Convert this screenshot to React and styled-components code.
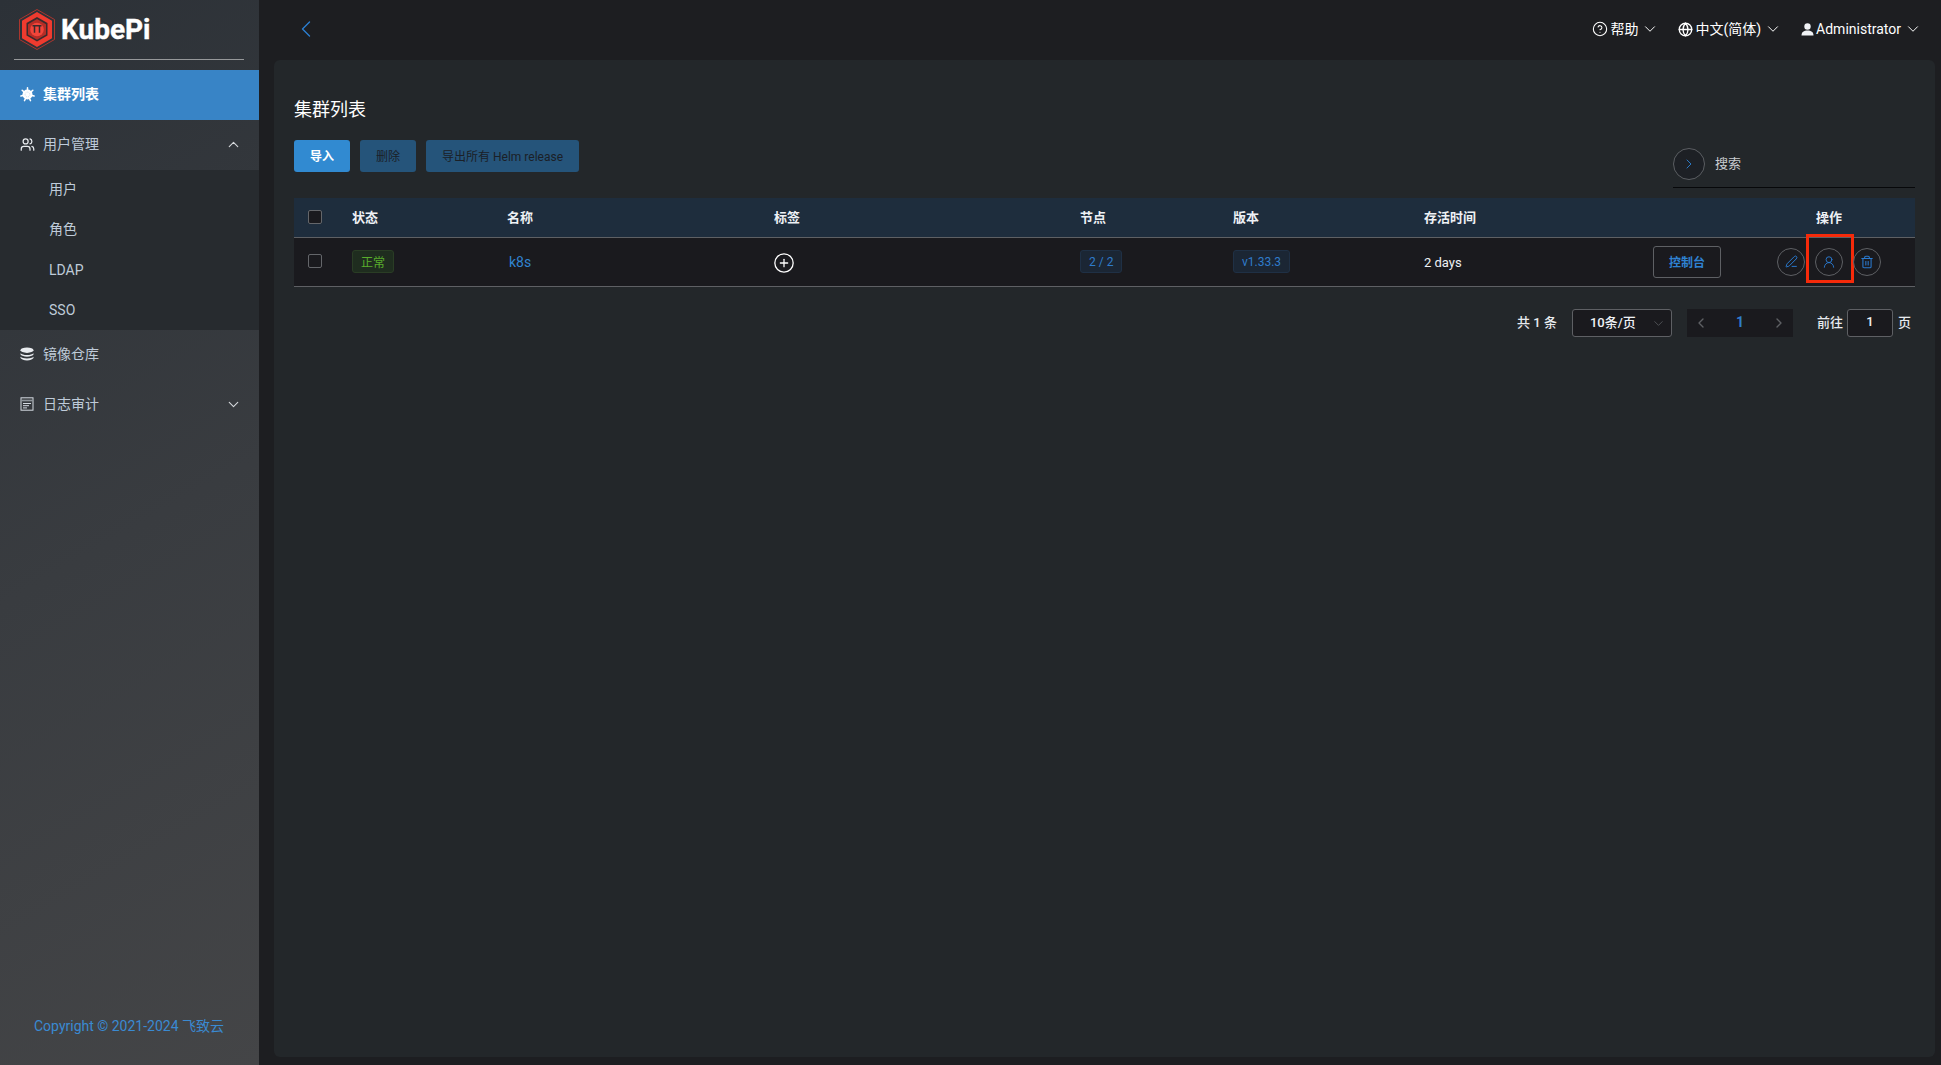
import React from "react";
import styled, { createGlobalStyle } from "styled-components";
import { ChevronLeft, ChevronRight, ChevronUp, ChevronDown, CircleHelp, Globe, Users, CirclePlus, PenLine, UserRound, Trash2 } from "lucide-react";

const FONT = `Roboto, "Noto Sans CJK SC", sans-serif`;
const COLS = "48px 155px 267px 306px 153px 191px 226px 103px 172px";

const Global = createGlobalStyle`
  html, body { margin: 0; padding: 0; height: 100%; }
  body { font-family: ${FONT}; background: #1d1e21; color: #fff; overflow: hidden; }
  * { box-sizing: border-box; }
`;

const Page = styled.div`display: flex; height: 1065px; width: 1941px;`;
const Side = styled.aside`
  width: 259px; flex: none; display: flex; flex-direction: column;
  background: linear-gradient(150deg, #2c3137 0%, #393c40 50%, #444547 100%);
`;
const Brand = styled.div`
  height: 60px; margin: 0 15px 10px 14px; padding: 9px 0 0 5px; display: flex; gap: 6px; align-items: flex-start;
  border-bottom: 1px solid #96989a;
`;
const BrandName = styled.span`
  font-size: 28px; font-weight: 700; line-height: 42px; color: #fff; -webkit-text-stroke: 0.4px #fff;
`;
const MenuRow = styled.div`
  height: 50px; display: flex; align-items: center; padding: 0 17px 5px 20px; gap: 9px; font-size: 14px;
  background: ${p => p.$active ? "#3884c6" : "transparent"};
  color: ${p => p.$active ? "#fff" : "#bfcbd9"};
  font-weight: ${p => p.$active ? 700 : 400};
  svg { flex: none; }
  > svg { margin-top: 3px; }
`;
const IconSlot = styled.span`
  width: 14px; height: 14px; flex: none; display: flex; align-items: center; justify-content: center; margin-top: 3px;
`;
const MenuLabel = styled.span`flex: 1;`;
const SubMenu = styled.div`background: #272b2f; padding: 0;`;
const SubRow = styled.div`
  height: 40px; display: flex; align-items: center; padding: 0 0 ${p => p.$latin ? 1 : 5}px 49px; font-size: 14px; color: #bfcbd9;
`;
const Copyright = styled.div`
  margin-top: auto; height: 75px; padding: 26px 0 0 34px; font-size: 14px; line-height: 20px; color: #3a8ad2;
`;
const Main = styled.main`flex: 1; min-width: 0; display: flex; flex-direction: column;`;
const Top = styled.header`
  height: 60px; flex: none; display: flex; align-items: center; justify-content: space-between; padding: 0 19px 2px 33px;
  color: #2c7fd0;
`;
const TopRight = styled.div`display: flex; align-items: center; gap: 19px;`;
const TopItem = styled.div`
  display: flex; align-items: center; gap: 2px; font-size: 14px; color: #fff;
  svg:last-child { margin-left: 1px; }
`;
const TopCjk = styled.span`padding-bottom: 2px;`;
const Card = styled.section`
  flex: 1; margin: 0 6px 8px 15px; padding: 37px 20px 0; background: #23272a; border-radius: 6px;
`;
const Title = styled.h1`margin: 0; font-size: 18px; line-height: 26px; font-weight: 400; color: #fff;`;
const ToolRow = styled.div`display: flex; justify-content: space-between; align-items: flex-start; margin-top: 17px; height: 58px;`;
const Buttons = styled.div`display: flex; gap: 10px;`;
const Btn = styled.div`
  height: 32px; padding: 0 16px 2px; border-radius: 3px; display: flex; align-items: center; font-size: 12px;
  background: ${p => p.$on ? "#318ad1" : "#25547a"};
  color: ${p => p.$on ? "#fff" : "#1b2027"};
  font-weight: ${p => p.$on ? 700 : 400};
`;
const Search = styled.div`
  width: 242px; height: 48px; padding: 8px 0 0; display: flex; align-items: flex-start; gap: 10px;
  border-bottom: 1px solid #07080a; font-size: 13px; color: #c9ccd0;
`;
const SearchRound = styled.div`
  width: 32px; height: 32px; border-radius: 50%; border: 1px solid #5b5e62; background: #1d2025;
  display: flex; align-items: center; justify-content: center; color: #2c7fd0;
`;
const SearchText = styled.span`line-height: 32px;`;
const HeadRow = styled.div`
  display: grid; grid-template-columns: ${COLS}; height: 40px; align-items: center; padding-bottom: 3px;
  background: #1e2d3d; border-bottom: 1px solid #5e6064; font-size: 13px; font-weight: 700; color: #eef1f5;
`;
const BodyRow = styled.div`
  display: grid; grid-template-columns: ${COLS}; height: 49px; align-items: center;
  background: #1a1a1e; border-bottom: 1px solid #5e6064; font-size: 13px; color: #eef1f5;
`;
const Cell = styled.div`
  padding-left: ${p => p.$pad ?? 10}px; display: flex; align-items: center;
  justify-content: ${p => p.$center ? "center" : "flex-start"};
`;
const Check = styled.span`
  width: 14px; height: 14px; border: 1px solid #64666a; border-radius: 2px; background: #1a1a1e; display: block;
  margin-bottom: ${p => p.$up ?? 0}px;
`;
const Tag = styled.span`
  height: 23px; margin-bottom: 1px; padding: 0 8px ${p => p.$green ? 1 : 0}px; border-radius: 3px; display: inline-flex; align-items: center; font-size: 12px;
  background: ${p => p.$green ? "#1f2d1f" : "#1b2634"};
  border: 1px solid ${p => p.$green ? "#2a3d25" : "#1f3045"};
  color: ${p => p.$green ? "#59ad2c" : "#2f7ccb"};
`;
const ClusterLink = styled.span`font-size: 14px; color: #3184d0; padding-left: 2px;`;
const AddTag = styled.span`display: flex; margin: 2px 0 0 -1px; color: #fff;`;
const ConsoleBtn = styled.div`
  width: 68px; height: 32px; padding-bottom: 1px; margin-bottom: 1px; border: 1px solid #5e6064; border-radius: 3px; display: flex; align-items: center; justify-content: center;
  font-size: 12px; font-weight: 700; color: #2f82d2;
`;
const Actions = styled.div`display: flex; gap: 10px; align-items: center; justify-content: center; width: 100%; height: 100%; padding-bottom: 1px;`;
const RoundBtn = styled.div`
  position: relative; width: 28px; height: 28px; border-radius: 50%; border: 1px solid #5e6064;
  display: flex; align-items: center; justify-content: center; color: #2a7ad0;
`;
const Highlight = styled.span`
  position: absolute; left: -10px; top: -15px; width: 48px; height: 49px; border: 3px solid #f62a0a; pointer-events: none;
`;
const Pager = styled.div`
  display: flex; justify-content: flex-end; align-items: center; height: 28px; margin-top: 22px; padding-right: 4px;
  font-size: 13px; font-weight: 500; color: #e8ebef;
`;
const PagerText = styled.span`padding-bottom: 4px; margin-right: ${p => p.$gap ?? 0}px;`;
const SizeSelect = styled.div`
  width: 100px; height: 28px; border: 1px solid #5e6064; border-radius: 3px; background: #1a1a1e; margin-right: 15px;
  display: flex; align-items: center; justify-content: space-between; padding: 0 5px 4px 17px; color: #eef1f5; font-size: 13px;
  svg { color: #5e6064; margin-top: 4px; }
`;
const PageBox = styled.div`
  width: 106px; height: 28px; background: #1a1a1e; display: flex; align-items: center; justify-content: space-between; padding: 0 6px;
  color: #5e6064; margin-right: 24px;
`;
const PageNum = styled.span`font-size: 14px; font-weight: 700; color: #2f7ccb; padding-bottom: 2px;`;
const JumpInput = styled.div`
  width: 46px; height: 28px; margin: 0 5px 0 4px; padding-bottom: 3px; border: 1px solid #5e6064; border-radius: 3px; background: #1a1a1e;
  display: flex; align-items: center; justify-content: center; font-size: 13px; color: #eef1f5;
`;

const Logo = () => (
  <svg width="36" height="41" viewBox="0 0 36 41" style={{ flex: "none" }}>
    <polygon points="18,0.5 35.5,10.5 35.5,30.5 18,40.5 0.5,30.5 0.5,10.5" fill="none" stroke="#c9372c" strokeWidth="0.8" />
    <polygon points="18,3 33,11.7 33,29.3 18,38 3,29.3 3,11.7" fill="#ef3b2f" />
    <polygon points="18,8 28.5,14 28.5,26.5 18,32.5 7.5,26.5 7.5,14" fill="#3a2a2c" />
    <polygon points="18,10 27,15.2 27,25.5 18,30.7 9,25.5 9,15.2" fill="#b52d26" />
    <circle cx="18" cy="20.5" r="6.8" fill="#f2453a" />
    <path d="M13.5 16.8h9M15.5 16.8v7M20.5 16.8v7" stroke="#3a2a2c" strokeWidth="1.5" fill="none" />
  </svg>
);

const K8sIcon = () => (
  <svg width="15" height="15" viewBox="0 0 15 15">
    <g stroke="#fff" strokeWidth="1.5" strokeLinecap="round">
      <path d="M7.5 7.5V0.8M7.5 7.5L12.8 3.3M7.5 7.5L14.1 9M7.5 7.5L10.5 13.6M7.5 7.5L4.5 13.6M7.5 7.5L0.9 9M7.5 7.5L2.2 3.3" />
    </g>
    <circle cx="7.5" cy="7.5" r="5" fill="#fff" />
    <circle cx="7.5" cy="7.5" r="2.4" fill="none" stroke="#b9d3ea" strokeWidth="0.8" strokeDasharray="1 1" />
  </svg>
);

const StackIcon = () => (
  <svg width="14" height="14" viewBox="0 0 14 14" fill="#e8ebef">
    <ellipse cx="7" cy="3.2" rx="6.5" ry="2.7" />
    <path d="M0.5 6.2c1.2 1 3.4 1.8 6.5 1.8s5.3-.8 6.5-1.8v1.3c-1.2 1.4-3.4 2.2-6.5 2.2S1.7 8.9 0.5 7.5z" />
    <path d="M0.5 9.7c1.2 1 3.4 1.7 6.5 1.700s5.300-.7 6.500-1.700v1.300c-1.200 1.500-3.400 2.500-6.500 2.500S1.700 12.500 0.500 11z" />
  </svg>
);

const LogIcon = () => (
  <svg width="14" height="14" viewBox="0 0 14 14" fill="none" stroke="#d5dbe2" strokeWidth="1">
    <rect x="1" y="0.8" width="12" height="12.4" />
    <path d="M1 3.5h12" strokeWidth="1.6" stroke="#8e949a" />
    <path d="M3 6.5h8M3 8.7h6M3 10.9h4" />
  </svg>
);

const SolidUser = () => (
  <svg width="13" height="13" viewBox="0 0 13 13" fill="#f0f2f5">
    <circle cx="6.5" cy="3.5" r="3.2" />
    <path d="M0.5 12.5c0-3.6 2.4-5 6-5s6 1.4 6 5z" />
  </svg>
);

const Head = ["状态", "名称", "标签", "节点", "版本", "存活时间"];

export default function App() {
  return (
    <Page>
      <Global />
      <Side>
        <Brand>
          <Logo />
          <BrandName>KubePi</BrandName>
        </Brand>
        <MenuRow $active><IconSlot><K8sIcon /></IconSlot><MenuLabel>集群列表</MenuLabel></MenuRow>
        <MenuRow><IconSlot><Users size={15} color="#e8ebef" /></IconSlot><MenuLabel>用户管理</MenuLabel><ChevronUp size={17} strokeWidth={1.6} color="#d5d8dc" /></MenuRow>
        <SubMenu>
          <SubRow>用户</SubRow>
          <SubRow>角色</SubRow>
          <SubRow $latin>LDAP</SubRow>
          <SubRow $latin>SSO</SubRow>
        </SubMenu>
        <MenuRow><IconSlot><StackIcon /></IconSlot><MenuLabel>镜像仓库</MenuLabel></MenuRow>
        <MenuRow><IconSlot><LogIcon /></IconSlot><MenuLabel>日志审计</MenuLabel><ChevronDown size={17} strokeWidth={1.6} color="#d5d8dc" /></MenuRow>
        <Copyright>Copyright © 2021-2024 飞致云</Copyright>
      </Side>
      <Main>
        <Top>
          <ChevronLeft size={28} strokeWidth={1.2} />
          <TopRight>
            <TopItem><CircleHelp size={16} strokeWidth={1.6} /><TopCjk>帮助</TopCjk><ChevronDown size={18} strokeWidth={1.3} /></TopItem>
            <TopItem><Globe size={15} strokeWidth={2.2} /><TopCjk>中文(简体)</TopCjk><ChevronDown size={18} strokeWidth={1.3} /></TopItem>
            <TopItem><SolidUser />Administrator<ChevronDown size={18} strokeWidth={1.3} /></TopItem>
          </TopRight>
        </Top>
        <Card>
          <Title>集群列表</Title>
          <ToolRow>
            <Buttons>
              <Btn $on>导入</Btn>
              <Btn>删除</Btn>
              <Btn>导出所有 Helm release</Btn>
            </Buttons>
            <Search>
              <SearchRound><ChevronRight size={16} strokeWidth={1.4} /></SearchRound>
              <SearchText>搜索</SearchText>
            </Search>
          </ToolRow>
          <HeadRow>
            <Cell $pad={14}><Check $up={-2} /></Cell>
            {Head.map(h => <Cell key={h}>{h}</Cell>)}
            <Cell />
            <Cell $center $pad={0}>操作</Cell>
          </HeadRow>
          <BodyRow>
            <Cell $pad={14}><Check $up={2} /></Cell>
            <Cell><Tag $green>正常</Tag></Cell>
            <Cell><ClusterLink>k8s</ClusterLink></Cell>
            <Cell><AddTag><CirclePlus size={22} strokeWidth={1.4} /></AddTag></Cell>
            <Cell><Tag>2 / 2</Tag></Cell>
            <Cell><Tag>v1.33.3</Tag></Cell>
            <Cell>2 days</Cell>
            <Cell $pad={13}><ConsoleBtn>控制台</ConsoleBtn></Cell>
            <Cell $pad={0}>
              <Actions>
                <RoundBtn><PenLine size={13} strokeWidth={1.8} /></RoundBtn>
                <RoundBtn><UserRound size={14} strokeWidth={1.6} /><Highlight /></RoundBtn>
                <RoundBtn><Trash2 size={14} strokeWidth={1.8} /></RoundBtn>
              </Actions>
            </Cell>
          </BodyRow>
          <Pager>
            <PagerText $gap={15}>共 1 条</PagerText>
            <SizeSelect>10条/页<ChevronDown size={15} strokeWidth={1.2} /></SizeSelect>
            <PageBox><ChevronLeft size={16} /><PageNum>1</PageNum><ChevronRight size={16} /></PageBox>
            <PagerText>前往</PagerText>
            <JumpInput>1</JumpInput>
            <PagerText>页</PagerText>
          </Pager>
        </Card>
      </Main>
    </Page>
  );
}
